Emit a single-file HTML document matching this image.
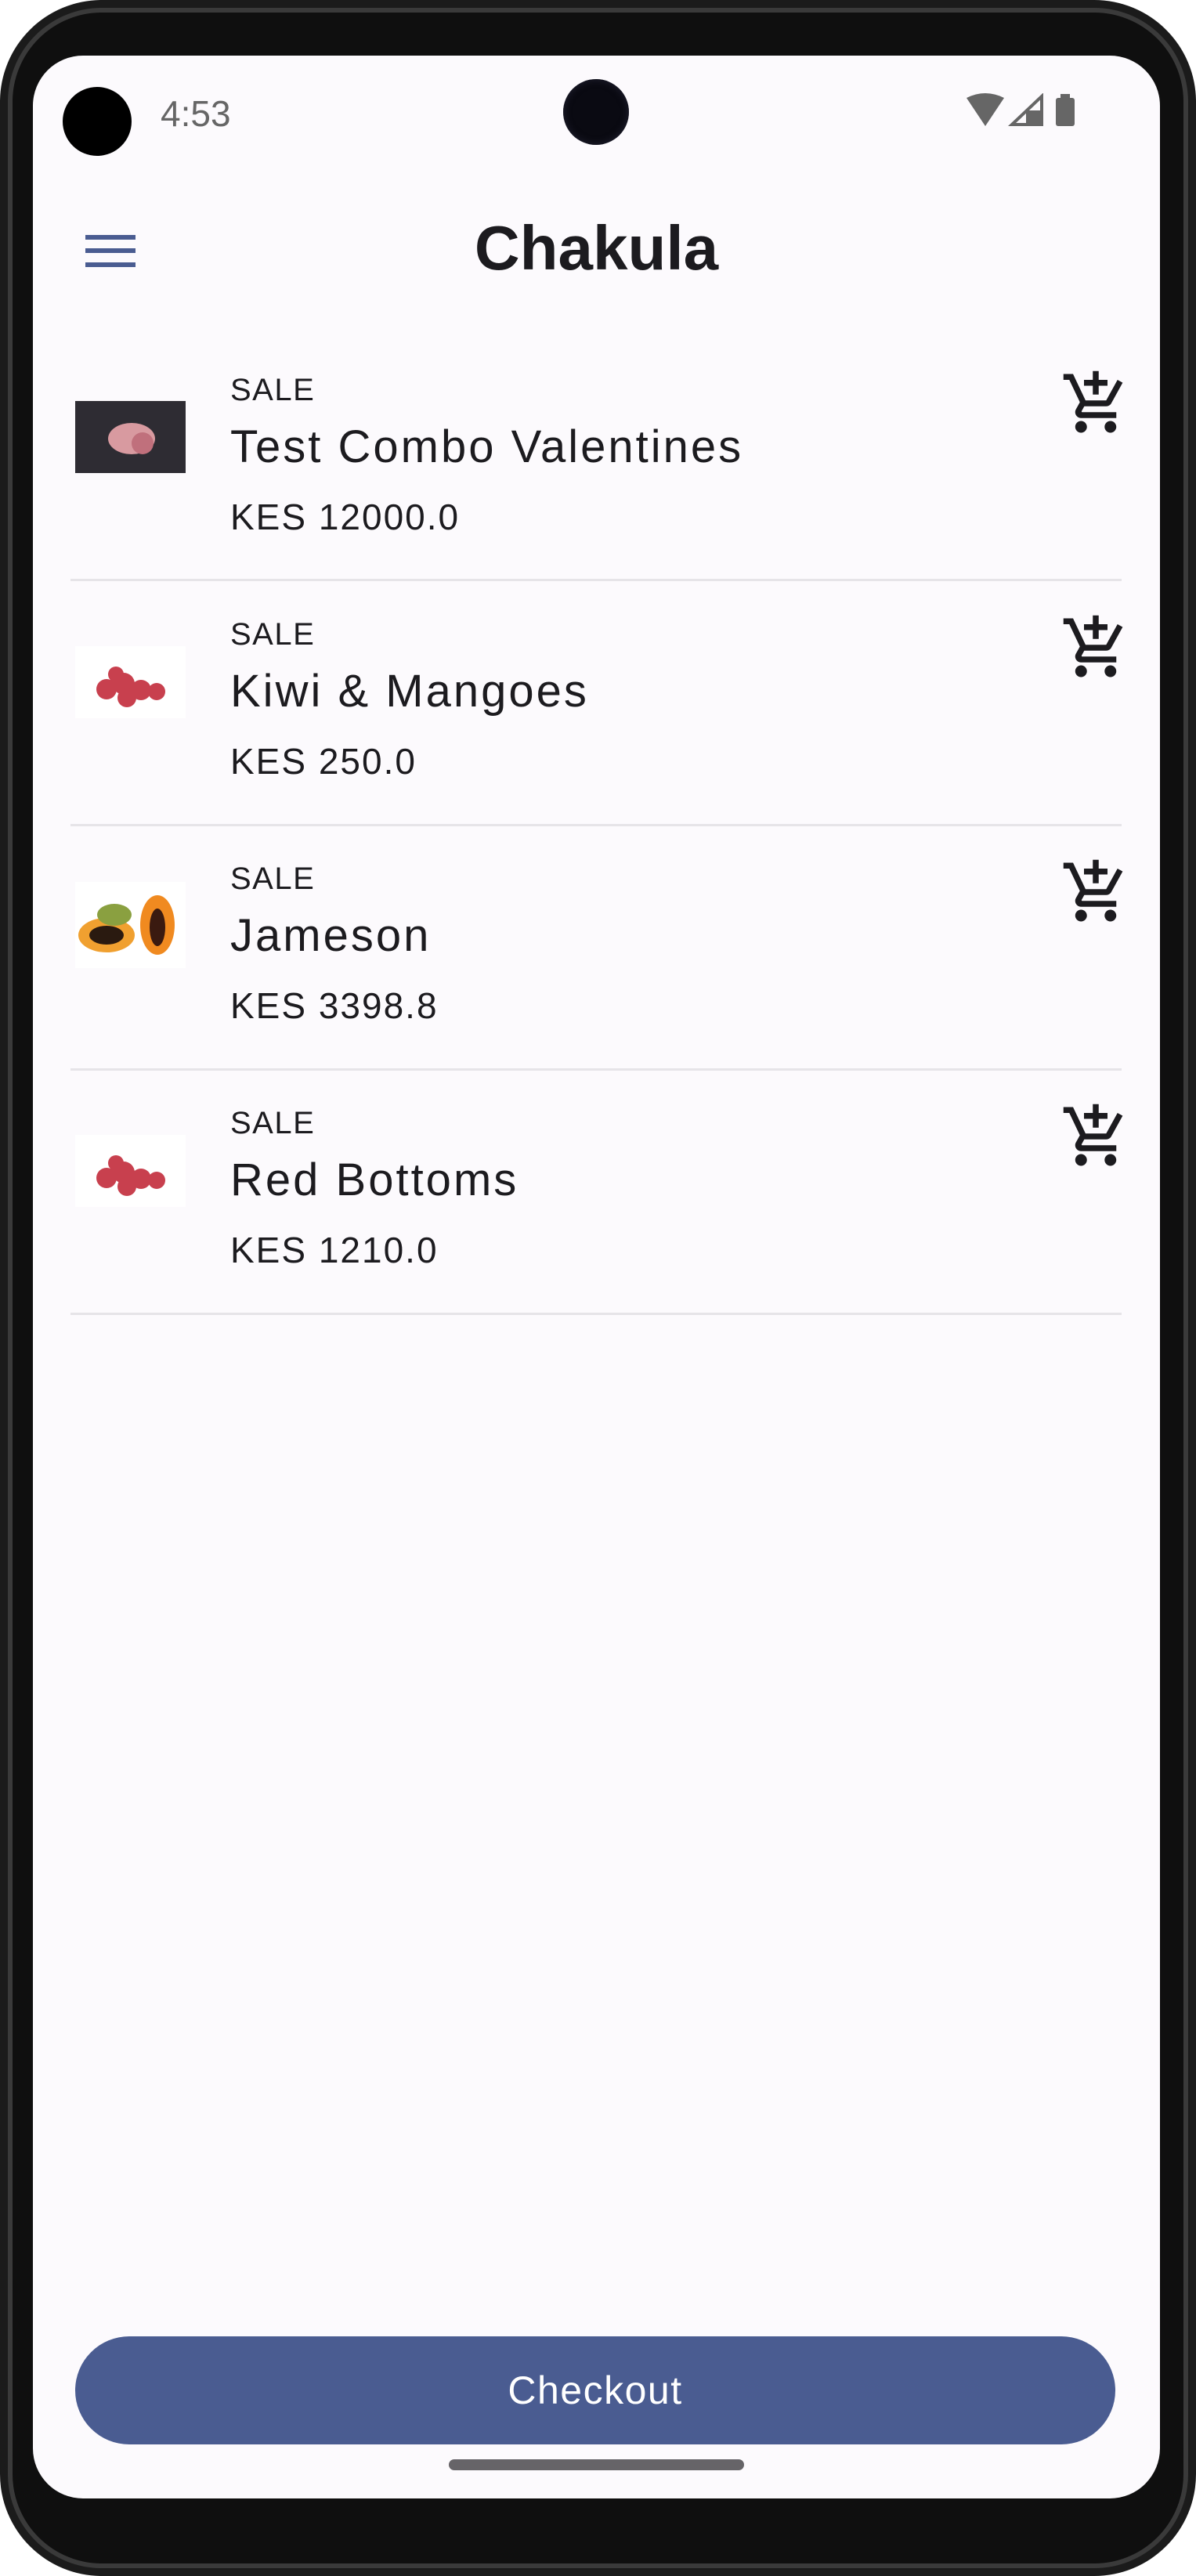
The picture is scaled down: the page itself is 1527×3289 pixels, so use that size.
<!DOCTYPE html>
<html><head><meta charset="utf-8"><style>
*{margin:0;padding:0;box-sizing:border-box}
body{width:1527px;height:3289px;background:#fff;position:relative;overflow:hidden;font-family:"Liberation Sans",sans-serif}
.frame{position:absolute;left:0;top:0;width:1527px;height:3289px;border-radius:130px;background:#1b1b1b}
.rim{position:absolute;left:10px;top:10px;right:10px;bottom:10px;border-radius:120px;background:#0f0f0f;border:6px solid #3a3a3a}
.screen{position:absolute;left:42px;top:71px;width:1439px;height:3119px;border-radius:64px;background:#fcfafd;overflow:hidden}
.abs{position:absolute}
.sale{position:absolute;left:252px;font-size:40px;color:#1c1b1f;letter-spacing:1.5px}
.name{position:absolute;left:252px;font-size:58px;color:#1c1b1f;letter-spacing:3px}
.price{position:absolute;left:252px;font-size:46px;color:#1c1b1f;letter-spacing:2px}
.sep{position:absolute;left:48px;width:1342px;height:3px;background:#e6e4e8}
.cart{position:absolute;left:1312px;width:90px;height:90px}
.thumb{position:absolute;left:54px;width:141px;height:92px}
</style></head><body>
<div class="frame"></div>
<div class="rim"></div>
<div class="screen">
  <div class="abs" style="left:38px;top:40px;width:88px;height:88px;border-radius:50%;background:#000"></div>
  <div class="abs" style="left:163px;top:47px;font-size:46px;color:#666">4:53</div>
  <div class="abs" style="left:677px;top:30px;width:84px;height:84px;border-radius:50%;background:#0a0a12;box-shadow:inset 0 0 10px #223"></div>
  <svg class="abs" style="left:1185px;top:48px" width="170" height="44" viewBox="0 0 160 44">
    <path d="M2 6 Q26 -6 50 6 L26 42 Z" fill="#666"/>
    <path d="M98 4 L98 40 L60 40 Z" fill="none" stroke="#666" stroke-width="4"/>
    <path d="M78 22 L78 40 L96 40 L96 22 Z" fill="#666"/>
    <rect x="116" y="6" width="24" height="36" rx="3" fill="#666"/><rect x="122" y="1" width="12" height="6" fill="#666"/>
  </svg>
  <div class="abs" style="left:67px;top:229px;width:64px;height:6px;background:#4a5c91"></div>
  <div class="abs" style="left:67px;top:246px;width:64px;height:6px;background:#4a5c91"></div>
  <div class="abs" style="left:67px;top:264px;width:64px;height:6px;background:#4a5c91"></div>
  <div class="abs" style="left:0;width:1439px;top:200px;text-align:center;font-size:80px;font-weight:bold;color:#1c1b1f">Chakula</div>

  <svg class="thumb" style="top:441px" viewBox="0 0 141 92"><rect width="141" height="92" fill="#2e2c33"/><ellipse cx="72" cy="48" rx="30" ry="20" fill="#d89aa0"/><ellipse cx="86" cy="54" rx="14" ry="14" fill="#c0707c"/></svg>
  <div class="sale" style="top:405px">SALE</div>
  <div class="name" style="top:466px">Test Combo Valentines</div>
  <div class="price" style="top:562px">KES 12000.0</div>
  <svg class="cart" style="top:399px" viewBox="0 0 24 24"><path fill="#1c1b1f" d="M11 9h2V6h3V4h-3V1h-2v3H8v2h3v3zm-4 9c-1.1 0-1.99.9-1.99 2S5.9 22 7 22s2-.9 2-2-.9-2-2-2zm10 0c-1.1 0-1.99.9-1.99 2s.89 2 1.99 2 2-.9 2-2-.9-2-2-2zm-9.83-3.25l.03-.12.9-1.63h7.45c.75 0 1.41-.41 1.75-1.03l3.86-7.01L19.42 4h-.01l-1.1 2-2.76 5H8.53l-.13-.27L6.16 6l-.95-2-.94-2H1v2h2l3.6 7.59-1.35 2.45c-.16.28-.25.61-.25.96 0 1.1.9 2 2 2h12v-2H7.42c-.13 0-.25-.11-.25-.25z"/></svg>
  <div class="sep" style="top:668px"></div>

  <svg class="thumb" style="top:754px" viewBox="0 0 141 92"><rect width="141" height="92" fill="#fff"/><g fill="#c8404e"><circle cx="40" cy="55" r="13"/><circle cx="62" cy="48" r="14"/><circle cx="84" cy="56" r="13"/><circle cx="104" cy="58" r="11"/><circle cx="66" cy="66" r="12"/><circle cx="52" cy="36" r="10"/></g></svg>
  <div class="sale" style="top:717px">SALE</div>
  <div class="name" style="top:778px">Kiwi &amp; Mangoes</div>
  <div class="price" style="top:874px">KES 250.0</div>
  <svg class="cart" style="top:711px" viewBox="0 0 24 24"><path fill="#1c1b1f" d="M11 9h2V6h3V4h-3V1h-2v3H8v2h3v3zm-4 9c-1.1 0-1.99.9-1.99 2S5.9 22 7 22s2-.9 2-2-.9-2-2-2zm10 0c-1.1 0-1.99.9-1.99 2s.89 2 1.99 2 2-.9 2-2-.9-2-2-2zm-9.83-3.25l.03-.12.9-1.63h7.45c.75 0 1.41-.41 1.75-1.03l3.86-7.01L19.42 4h-.01l-1.1 2-2.76 5H8.53l-.13-.27L6.16 6l-.95-2-.94-2H1v2h2l3.6 7.59-1.35 2.45c-.16.28-.25.61-.25.96 0 1.1.9 2 2 2h12v-2H7.42c-.13 0-.25-.11-.25-.25z"/></svg>
  <div class="sep" style="top:981px"></div>

  <svg class="thumb" style="top:1055px;height:110px" viewBox="0 0 141 110"><rect width="141" height="110" fill="#fff"/><ellipse cx="40" cy="68" rx="36" ry="22" fill="#f0a030"/><ellipse cx="40" cy="68" rx="22" ry="12" fill="#2a1a10"/><ellipse cx="50" cy="42" rx="22" ry="14" fill="#8aa040"/><ellipse cx="105" cy="55" rx="22" ry="38" fill="#f08a20"/><ellipse cx="105" cy="58" rx="10" ry="24" fill="#3a1a10"/></svg>
  <div class="sale" style="top:1029px">SALE</div>
  <div class="name" style="top:1090px">Jameson</div>
  <div class="price" style="top:1186px">KES 3398.8</div>
  <svg class="cart" style="top:1023px" viewBox="0 0 24 24"><path fill="#1c1b1f" d="M11 9h2V6h3V4h-3V1h-2v3H8v2h3v3zm-4 9c-1.1 0-1.99.9-1.99 2S5.9 22 7 22s2-.9 2-2-.9-2-2-2zm10 0c-1.1 0-1.99.9-1.99 2s.89 2 1.99 2 2-.9 2-2-.9-2-2-2zm-9.83-3.25l.03-.12.9-1.63h7.45c.75 0 1.41-.41 1.75-1.03l3.86-7.01L19.42 4h-.01l-1.1 2-2.76 5H8.53l-.13-.27L6.16 6l-.95-2-.94-2H1v2h2l3.6 7.59-1.35 2.45c-.16.28-.25.61-.25.96 0 1.1.9 2 2 2h12v-2H7.42c-.13 0-.25-.11-.25-.25z"/></svg>
  <div class="sep" style="top:1293px"></div>

  <svg class="thumb" style="top:1378px" viewBox="0 0 141 92"><rect width="141" height="92" fill="#fff"/><g fill="#c8404e"><circle cx="40" cy="55" r="13"/><circle cx="62" cy="48" r="14"/><circle cx="84" cy="56" r="13"/><circle cx="104" cy="58" r="11"/><circle cx="66" cy="66" r="12"/><circle cx="52" cy="36" r="10"/></g></svg>
  <div class="sale" style="top:1341px">SALE</div>
  <div class="name" style="top:1402px">Red Bottoms</div>
  <div class="price" style="top:1498px">KES 1210.0</div>
  <svg class="cart" style="top:1335px" viewBox="0 0 24 24"><path fill="#1c1b1f" d="M11 9h2V6h3V4h-3V1h-2v3H8v2h3v3zm-4 9c-1.1 0-1.99.9-1.99 2S5.9 22 7 22s2-.9 2-2-.9-2-2-2zm10 0c-1.1 0-1.99.9-1.99 2s.89 2 1.99 2 2-.9 2-2-.9-2-2-2zm-9.83-3.25l.03-.12.9-1.63h7.45c.75 0 1.41-.41 1.75-1.03l3.86-7.01L19.42 4h-.01l-1.1 2-2.76 5H8.53l-.13-.27L6.16 6l-.95-2-.94-2H1v2h2l3.6 7.59-1.35 2.45c-.16.28-.25.61-.25.96 0 1.1.9 2 2 2h12v-2H7.42c-.13 0-.25-.11-.25-.25z"/></svg>
  <div class="sep" style="top:1605px"></div>

  <div class="abs" style="left:54px;top:2912px;width:1328px;height:138px;border-radius:69px;background:#4a5c91;color:#fff;font-size:50px;text-align:center;line-height:138px;letter-spacing:1.5px">Checkout</div>
  <div class="abs" style="left:531px;top:3069px;width:377px;height:14px;border-radius:7px;background:#666468"></div>
</div>
</body></html>
